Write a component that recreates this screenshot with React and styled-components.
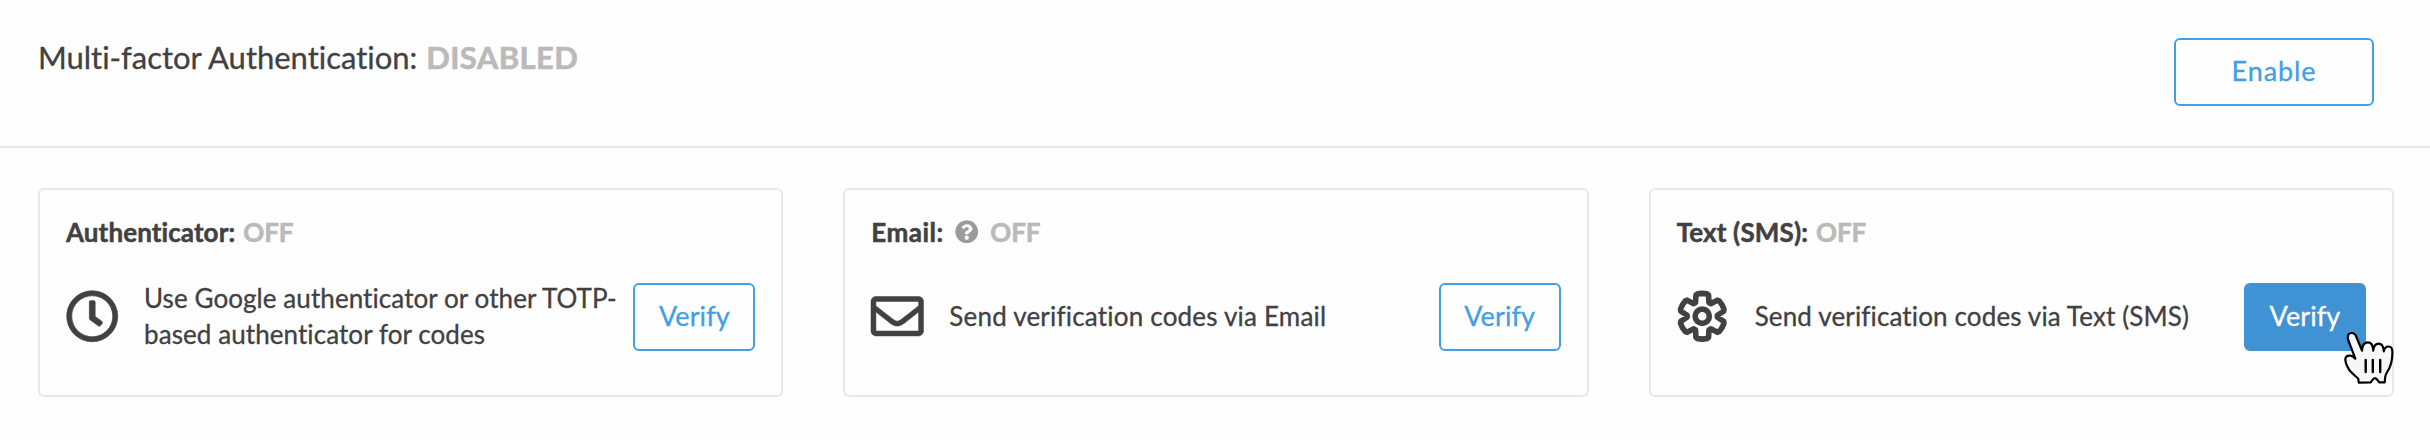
import React from 'react'
import styled, { createGlobalStyle } from 'styled-components'
import { FaRegClock, FaRegEnvelope, FaQuestionCircle } from 'react-icons/fa'

const GlobalStyle = createGlobalStyle`
  * { box-sizing: border-box; }
  body {
    margin: 0;
    background: #fefefe;
    color: #414042;
    font-family: Lato, 'Liberation Sans', sans-serif;
    font-variant-ligatures: none;
  }
`

const Page = styled.div`
  height: 440px;
  overflow: hidden;
`

const Header = styled.header`
  display: flex;
  justify-content: space-between;
  align-items: flex-start;
  height: 148px;
  padding: 38px 56px 0 38px;
  border-bottom: 2px solid #e8e8e8;
`

const Title = styled.h1`
  display: flex;
  gap: 9px;
  margin: 0;
  font-size: 31px;
  line-height: 39px;
  font-weight: 400;
  letter-spacing: -0.02px;
  -webkit-text-stroke: 0.3px currentColor;
`

const Status = styled.span`
  color: #bababa;
  font-weight: 700;
  letter-spacing: ${p => p.$spacing || '-0.1px'};
  -webkit-text-stroke: 0.6px currentColor;
`

const Button = styled.button`
  flex: none;
  width: ${p => p.$width || '122px'};
  height: 68px;
  padding: 0 0 4px;
  border: 2px solid ${p => (p.$active ? '#3f92d4' : '#439fe3')};
  border-radius: 6px;
  background: ${p => (p.$active ? '#3f92d4' : '#fefefe')};
  color: ${p => (p.$active ? '#fff' : '#439fe3')};
  font: inherit;
  font-size: 27px;
  letter-spacing: ${p => p.$spacing || '0.1px'};
  -webkit-text-stroke: 0.3px currentColor;
`

const Cards = styled.main`
  display: grid;
  grid-template-columns: repeat(3, 1fr);
  gap: 60px;
  padding: 40px 36px 0 38px;
`

const Card = styled.section`
  height: 209px;
  padding: 24px 26px 0;
  border: 2px solid #e8e8e8;
  border-radius: 6px;
`

const CardTitle = styled.h2`
  display: flex;
  align-items: center;
  gap: 8px;
  margin: 0;
  height: 36px;
  font-size: 26px;
  line-height: 36px;
  font-weight: 700;
  letter-spacing: ${p => p.$spacing || '0'};
  -webkit-text-stroke: 0.5px currentColor;
`

const Help = styled(FaQuestionCircle)`
  width: 23.5px;
  height: 23.5px;
  margin: 0 4px 1px 3px;
  color: #9b9b9b;
`

const CardBody = styled.div`
  display: flex;
  align-items: center;
  height: 68px;
  margin-top: 33px;
`

const IconBox = styled.div`
  display: flex;
  flex: none;
  align-items: center;
  justify-content: center;
  width: 52px;
  height: 54px;
  margin: 0 26px 2px 0;

  svg {
    flex: none;
    width: 52.5px;
    height: 52.5px;
    overflow: visible;
  }
`

const ClockIcon = styled(FaRegClock)`
  stroke: currentColor;
  stroke-width: 7px;
`

const EnvelopeIcon = styled(FaRegEnvelope)`
  stroke: currentColor;
  stroke-width: 5px;
`

const Description = styled.p`
  flex: 1;
  margin: 0 0 3px;
  font-size: 26px;
  line-height: 36px;
  white-space: pre;
  letter-spacing: ${p => p.$spacing};
  -webkit-text-stroke: 0.3px currentColor;
`

const Pointer = styled.svg`
  position: absolute;
  left: 2340px;
  top: 328px;
  width: 60px;
  height: 60px;
`

// six teeth, each one turned by 60 degrees
const tooth = [[-6.7, -13.6], [-6.3, -21.2], [-4.6, -22.4], [0, -22.9], [4.6, -22.4], [6.3, -21.2], [6.7, -13.6]]
const gearPoints = [0, 1, 2, 3, 4, 5]
  .flatMap(i => {
    const a = (i * Math.PI) / 3
    return tooth.map(([x, y]) => [
      (x * Math.cos(a) - y * Math.sin(a)).toFixed(2),
      (x * Math.sin(a) + y * Math.cos(a)).toFixed(2),
    ].join(','))
  })
  .join(' ')

function Gear() {
  return (
    <svg viewBox="-26.25 -26.25 52.5 52.5" fill="none" stroke="currentColor" strokeWidth="5.6" strokeLinejoin="round">
      <polygon points={gearPoints} />
      <circle r="7.1" />
    </svg>
  )
}

function Hand() {
  return (
    <Pointer viewBox="0 0 60 60" fill="#f7f7f7" stroke="#000" strokeWidth="2.2" strokeLinecap="round" strokeLinejoin="round">
      <path d="M15.3 30.7 L8.6 13 C6.6 8 8.4 5 11.7 5 C14.3 5 15.6 6.8 16.4 9 L22 22.7 C22.2 17 24 14.3 28 14.3 C31.5 14.3 33 17 33.2 22.7 C33.6 18 35.4 15.6 38.7 15.6 C42 15.6 43.5 18.4 43.8 23.3 C44.4 20 46 18.5 48.5 18.5 C51.5 18.5 52.4 20.6 52.4 24 C52.4 30 51.6 35.4 49.3 40.3 C47.4 43.8 45.6 45.6 45.2 49 L44.7 54.4 L39.2 54.4 C37.8 52.6 36.6 50.2 34.8 50.2 C33 50.2 32 52.6 30.8 54.4 L18.8 54.6 L18.2 50.6 C14.4 47 10.3 44.5 8.3 40.3 C6.7 37 5.3 35 5.3 31.4 C5.3 28.4 7.4 27.3 10.4 27.7 C12.6 28 14 29.2 15.3 30.7 Z" />
      <path d="M25.7 32 V44 M32.8 32 V44 M40.2 32 V44" strokeWidth="2.4" />
    </Pointer>
  )
}

function App() {
  return (
    <Page>
      <GlobalStyle />

      <Header>
        <Title>
          <span>Multi-factor Authentication:</span>
          <Status $spacing="0.4px">DISABLED</Status>
        </Title>
        <Button $width="200px" $spacing="0.9px">Enable</Button>
      </Header>

      <Cards>
        <Card>
          <CardTitle $spacing="0.1px">
            Authenticator: <Status>OFF</Status>
          </CardTitle>
          <CardBody>
            <IconBox><ClockIcon /></IconBox>
            <Description $spacing="0.08px">{'Use Google authenticator or other TOTP-\nbased authenticator for codes'}</Description>
            <Button>Verify</Button>
          </CardBody>
        </Card>

        <Card>
          <CardTitle $spacing="0.5px">
            Email: <Help /> <Status>OFF</Status>
          </CardTitle>
          <CardBody>
            <IconBox><EnvelopeIcon /></IconBox>
            <Description $spacing="0.2px">Send verification codes via Email</Description>
            <Button>Verify</Button>
          </CardBody>
        </Card>

        <Card>
          <CardTitle $spacing="0.15px">
            Text (SMS): <Status>OFF</Status>
          </CardTitle>
          <CardBody>
            <IconBox><Gear /></IconBox>
            <Description $spacing="0.14px">Send verification codes via Text (SMS)</Description>
            <Button $active>Verify</Button>
          </CardBody>
        </Card>
      </Cards>

      <Hand />
    </Page>
  )
}

export default App
